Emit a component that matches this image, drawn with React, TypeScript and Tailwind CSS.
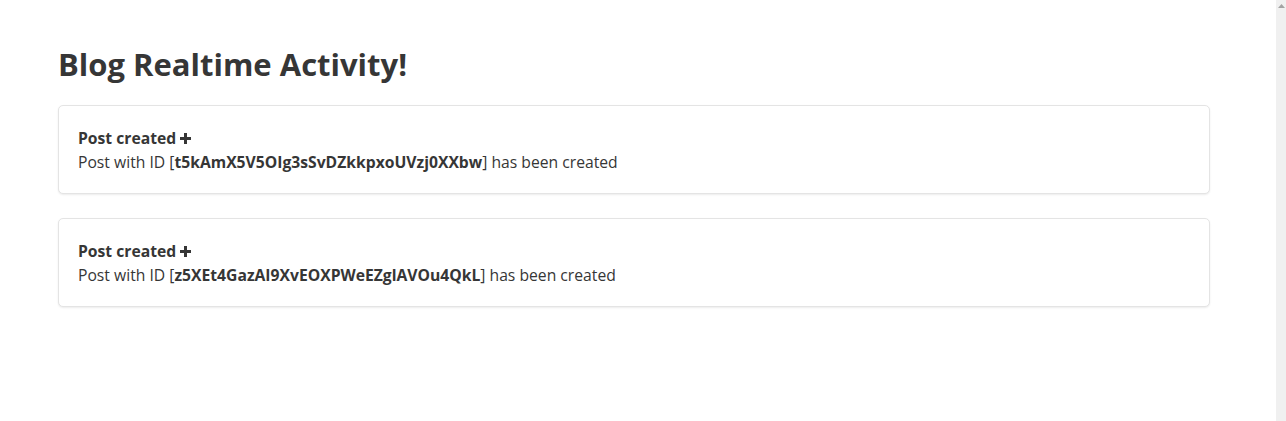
import React from 'react';

const posts = ['t5kAmX5V5OIg3sSvDZkkpxoUVzj0XXbw', 'z5XEt4GazAI9XvEOXPWeEZglAVOu4QkL'];

const PlusIcon: React.FC = () => (
  <svg width="11" height="11" viewBox="0 0 11 11" className="inline-block ml-[4px] -mt-[2px] align-middle">
    <rect x="4" y="0" width="3" height="11" fill="#363636" />
    <rect x="0" y="4" width="11" height="3" fill="#363636" />
  </svg>
);

const App: React.FC = () => {
  return (
    <div className="flex min-h-[421px] bg-white text-[#363636]" style={{ fontFamily: '"Open Sans", Lato, sans-serif' }}>
      <div className="flex-1 pl-[58px] pt-[40px]">
        <div className="w-[1152px]">
          <h1 className="text-[31px] leading-[48px] font-bold mb-[17px]">Blog Realtime Activity!</h1>

          {/* Activity feed */}
          <div className="flex flex-col gap-[24px]">
            {posts.map((id) => (
              <div
                key={id}
                className="bg-white border border-[#e4e4e4] rounded-[5px] shadow-[0_1px_2px_rgba(0,0,0,0.08)] px-[19px] pt-[20px] pb-[19px] text-[15.7px] leading-[24px]"
              >
                <p className="font-bold">
                  Post created
                  <PlusIcon />
                </p>
                <p>
                  Post with ID [<strong>{id}</strong>] has been created
                </p>
              </div>
            ))}
          </div>
        </div>
      </div>

      {/* Scrollbar track */}
      <div className="w-[10px] bg-[#f0f0f0] flex justify-center pt-[4px]">
        <svg width="7" height="4" viewBox="0 0 7 4">
          <polygon points="3.5,0 7,4 0,4" fill="#a3a3a3" />
        </svg>
      </div>
    </div>
  );
};

export default App;
